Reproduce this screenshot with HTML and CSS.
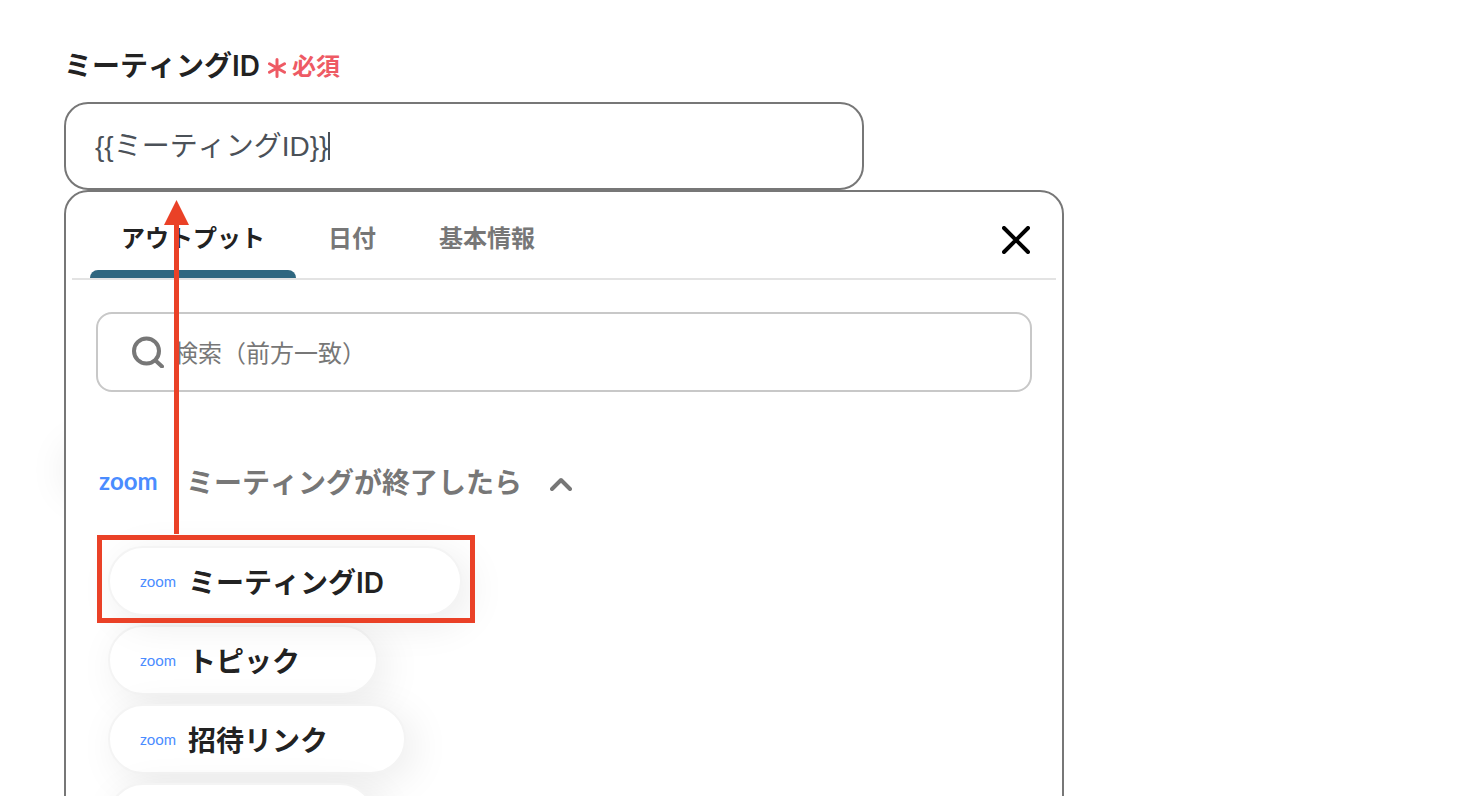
FILE: index.html
```html
<!DOCTYPE html>
<html lang="ja">
    <head>
        <meta charset="UTF-8">
        <meta name="viewport" content="width=device-width, initial-scale=1.0">
        <title>ミーティングID</title>
        <link rel="stylesheet" href="styles.css">
    </head>

    <body>
        <main class="field">
            <div class="field-label">
                <label for="meeting-id">ミーティングID</label>
                <span class="required">
                    <svg class="asterisk" viewBox="0 0 18 20">
                        <path d="M9 1.5v17M1.5 5.8l15 8.4M16.5 5.8l-15 8.4" />
                    </svg>
                    必須
                </span>
            </div>
            <div class="input-box">
                <input id="meeting-id" type="text" value="{{ミーティングID}}">
                <span class="caret"></span>
            </div>

            <section class="panel">
                <header class="panel-header">
                    <nav class="tabs">
                        <button class="tab active" type="button">アウトプット</button>
                        <button class="tab" type="button">日付</button>
                        <button class="tab" type="button">基本情報</button>
                    </nav>
                    <button class="btn-close" type="button" aria-label="閉じる">
                        <svg viewBox="0 0 28 28">
                            <path d="M2 2l24 24M26 2l-24 24" />
                        </svg>
                    </button>
                </header>

                <div class="search-box">
                    <svg class="search-icon" viewBox="0 0 32 32">
                        <circle cx="14.5" cy="15" r="12.5" />
                        <path d="M23.5 24.5l6.500 6" />
                    </svg>
                    <input type="search" placeholder="検索（前方一致）" aria-label="検索">
                </div>

                <button class="group" type="button">
                    <span class="logo">zoom</span>
                    <span class="group-title">ミーティングが終了したら</span>
                    <svg class="chevron" viewBox="0 0 22 14">
                        <path d="M2 12l9-9 9 9" />
                    </svg>
                </button>

                <ul class="outputs">
                    <li class="highlight">
                        <button class="output" type="button"><span class="logo small">zoom</span>ミーティングID</button>
                    </li>
                    <li>
                        <button class="output" type="button"><span class="logo small">zoom</span>トピック</button>
                    </li>
                    <li>
                        <button class="output" type="button"><span class="logo small">zoom</span>招待リンク</button>
                    </li>
                    <li>
                        <button class="output" type="button" aria-label="zoom"></button>
                    </li>
                </ul>

                <svg class="arrow" viewBox="0 0 25 334">
                    <path d="M12.5 0L25 25H15v309h-5V25H0z" />
                </svg>
            </section>
        </main>
    </body>

</html>
```

FILE: styles.css
```css
* {
    margin: 0;
    padding: 0;
    box-sizing: border-box;
    font-family: 'Liberation Sans', 'Noto Sans CJK JP', sans-serif;
    font-kerning: none;
}

body {
    height: 100vh;
    overflow: hidden;
    background: white;
    color: #222;
}

button,
input {
    border: none;
    outline: none;
    background: transparent;
}

button {
    cursor: pointer;
    color: inherit;
    font-weight: bold;
}

svg {
    flex: none;
    fill: none;
    stroke: currentColor;
    stroke-linecap: round;
}

.field {
    padding: 42px 64px 0;
}

.field-label {
    display: flex;
    align-items: center;
    gap: 8px;
    height: 44px;
    margin-bottom: 16px;
    font-size: 28px;
    font-weight: bold;

    & label {
        font-family: Inter, 'Noto Sans CJK JP', sans-serif;
        font-weight: 600;
    }
}

.required {
    display: flex;
    align-items: center;
    gap: 6px;
    font-size: 24px;
    color: #ee5a64;

    & .asterisk {
        width: 18px;
        height: 20px;
        margin-top: 8px;
        stroke-width: 3;
    }
}

.input-box {
    display: flex;
    align-items: center;
    max-width: 800px;
    height: 88px;
    padding: 0 29px;
    border: 2px solid #777;
    border-radius: 24px;

    & input {
        field-sizing: content;
        height: 60px;
        padding-bottom: 4px;
        font-size: 28px;
        color: #4b5158;
    }

    & .caret {
        width: 2px;
        height: 28px;
        background: #4b5158;
    }
}

.panel {
    position: relative;
    max-width: 1000px;
    min-height: 640px;
    border: 2px solid #777;
    border-radius: 24px;
    background: white;

    /* カードの影 */
    &::before {
        content: '';
        position: absolute;
        z-index: -1;
        top: 260px;
        left: 6px;
        width: 60px;
        height: 36px;
        border-radius: 18px;
        box-shadow: 0 0 40px 6px rgba(0, 0, 0, 0.1);
    }
}

.panel-header {
    display: flex;
    justify-content: space-between;
    align-items: center;
    height: 88px;
    margin: 0 6px;
    padding: 0 26px 0 18px;
    border-bottom: 2px solid #e3e3e3;
}

.tabs {
    display: flex;
    align-self: stretch;
    gap: 1px;
}

.tab {
    position: relative;
    padding: 2px 31px 0;
    font-size: 24px;
    color: #777;

    &.active {
        color: #222;
    }

    &.active::after {
        content: '';
        position: absolute;
        left: 0;
        right: 0;
        bottom: 0;
        height: 8px;
        border-radius: 8px 8px 0 0;
        background: #2f6780;
    }
}

.btn-close {
    height: 28px;
    margin-top: 10px;
    color: black;

    & svg {
        width: 28px;
        height: 28px;
        stroke-width: 4;
    }
}

.search-box {
    display: flex;
    align-items: center;
    gap: 10px;
    height: 80px;
    margin: 32px 30px 0;
    padding: 0 34px;
    border: 2px solid #c8c8c8;
    border-radius: 16px;

    & .search-icon {
        width: 32px;
        height: 32px;
        stroke-width: 4;
        color: #777;
    }

    & input {
        flex: 1;
        height: 60px;
        padding-top: 4px;
        font-size: 24px;
    }

    & input::placeholder {
        color: #777;
    }
}

.logo {
    width: 60px;
    font-family: Lato, sans-serif;
    font-size: 24px;
    line-height: 24px;
    font-weight: bold;
    text-align: left;
    color: #4a8cff;

    &.small {
        width: 36px;
        margin-right: 12px;
        font-size: 15px;
        font-weight: normal;
    }
}

.group {
    display: flex;
    align-items: center;
    height: 44px;
    margin: 67px 33px 0;
    color: #777;

    & .group-title {
        margin: 0 28px 0 27px;
        font-size: 28px;
    }

    & .chevron {
        width: 22px;
        height: 14px;
        margin-top: 6px;
        stroke-width: 4;
        stroke-linejoin: round;
    }
}

.outputs {
    display: flex;
    flex-direction: column;
    align-items: flex-start;
    gap: 9px;
    margin: 43px 42px 0;
    list-style: none;
}

.output {
    display: flex;
    align-items: center;
    min-width: 267px;
    height: 70px;
    padding: 0 76px 0 30px;
    border: 2px solid #f4f4f4;
    border-radius: 35px;
    background: white;
    box-shadow: 8px 8px 40px rgba(0, 0, 0, 0.08);
    font-family: Inter, 'Noto Sans CJK JP', sans-serif;
    font-size: 28px;
    font-weight: 600;
}

.highlight {
    position: relative;

    &::after {
        content: '';
        position: absolute;
        z-index: 1;
        inset: -11px -13px -7px -11px;
        border: 5px solid #ea4127;
    }
}

.arrow {
    position: absolute;
    top: 8px;
    left: 98px;
    width: 25px;
    height: 334px;
    fill: #ea4127;
    stroke: none;
}
```
